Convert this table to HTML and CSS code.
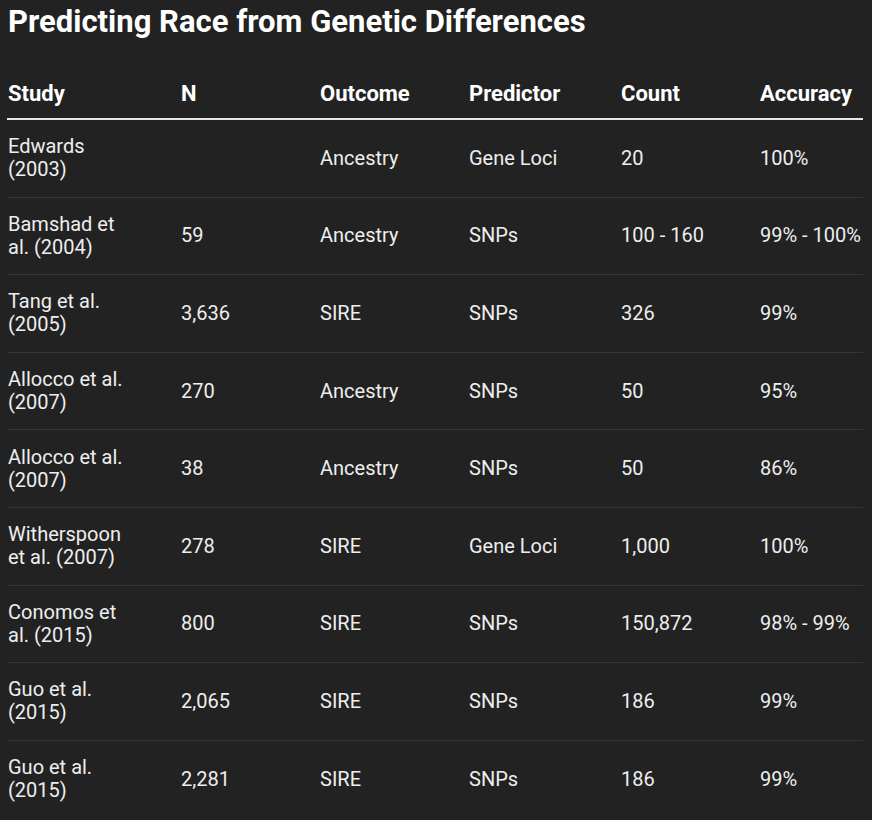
FILE: index.html
```html
<!DOCTYPE html>
<html lang="en">
<head>
<meta charset="utf-8">
<title>Predicting Race from Genetic Differences</title>
<link rel="stylesheet" href="styles.css">
</head>
<body>
<main class="page">
  <h1 class="title">Predicting Race from Genetic Differences</h1>
  <table class="data">
    <colgroup>
      <col class="c-study"><col class="c-n"><col class="c-outcome"><col class="c-pred"><col class="c-count"><col class="c-acc">
    </colgroup>
    <thead>
      <tr><th>Study</th><th>N</th><th>Outcome</th><th>Predictor</th><th>Count</th><th>Accuracy</th></tr>
    </thead>
    <tbody>
      <tr><td class="study">Edwards (2003)</td><td></td><td>Ancestry</td><td>Gene Loci</td><td>20</td><td>100%</td></tr>
      <tr><td class="study">Bamshad et al. (2004)</td><td>59</td><td>Ancestry</td><td>SNPs</td><td>100 - 160</td><td>99% - 100%</td></tr>
      <tr><td class="study">Tang et al. (2005)</td><td>3,636</td><td>SIRE</td><td>SNPs</td><td>326</td><td>99%</td></tr>
      <tr><td class="study">Allocco et al. (2007)</td><td>270</td><td>Ancestry</td><td>SNPs</td><td>50</td><td>95%</td></tr>
      <tr><td class="study">Allocco et al. (2007)</td><td>38</td><td>Ancestry</td><td>SNPs</td><td>50</td><td>86%</td></tr>
      <tr><td class="study">Witherspoon et al. (2007)</td><td>278</td><td>SIRE</td><td>Gene Loci</td><td>1,000</td><td>100%</td></tr>
      <tr><td class="study">Conomos et al. (2015)</td><td>800</td><td>SIRE</td><td>SNPs</td><td>150,872</td><td>98% - 99%</td></tr>
      <tr><td class="study">Guo et al. (2015)</td><td>2,065</td><td>SIRE</td><td>SNPs</td><td>186</td><td>99%</td></tr>
      <tr><td class="study">Guo et al. (2015)</td><td>2,281</td><td>SIRE</td><td>SNPs</td><td>186</td><td>99%</td></tr>
    </tbody>
  </table>
</main>
</body>
</html>
```
FILE: styles.css
```css
html, body {
  margin: 0;
  padding: 0;
  background: #222222;
}
body {
  font-family: Roboto, "Liberation Sans", Arial, sans-serif;
  color: #eeeeee;
}
.page {
  padding: 0 0 0 7px;
}
.title {
  margin: 3px 0 0 1px;
  font-size: 31px;
  font-weight: 700;
  line-height: 37px;
  color: #ffffff;
}
.data {
  margin-top: 26px;
  width: 856px;
  border-collapse: collapse;
  table-layout: fixed;
}
.c-study { width: 173px; }
.c-n { width: 139px; }
.c-outcome { width: 149px; }
.c-pred { width: 152px; }
.c-count { width: 139px; }
.c-acc { width: 104px; }
.data th {
  text-align: left;
  font-size: 22px;
  font-weight: 700;
  line-height: 26px;
  color: #ffffff;
  padding: 15px 0 11px 1px;
  border-bottom: 2px solid #e6e6e6;
  white-space: nowrap;
}
.data td {
  font-size: 20px;
  line-height: 23px;
  padding: 15.3px 0 15.3px 1px;
  vertical-align: middle;
  border-bottom: 1px solid #363636;
}
.data tbody tr:last-child td {
  border-bottom: none;
}
.data td.study {
  padding-right: 52px;
}
```
